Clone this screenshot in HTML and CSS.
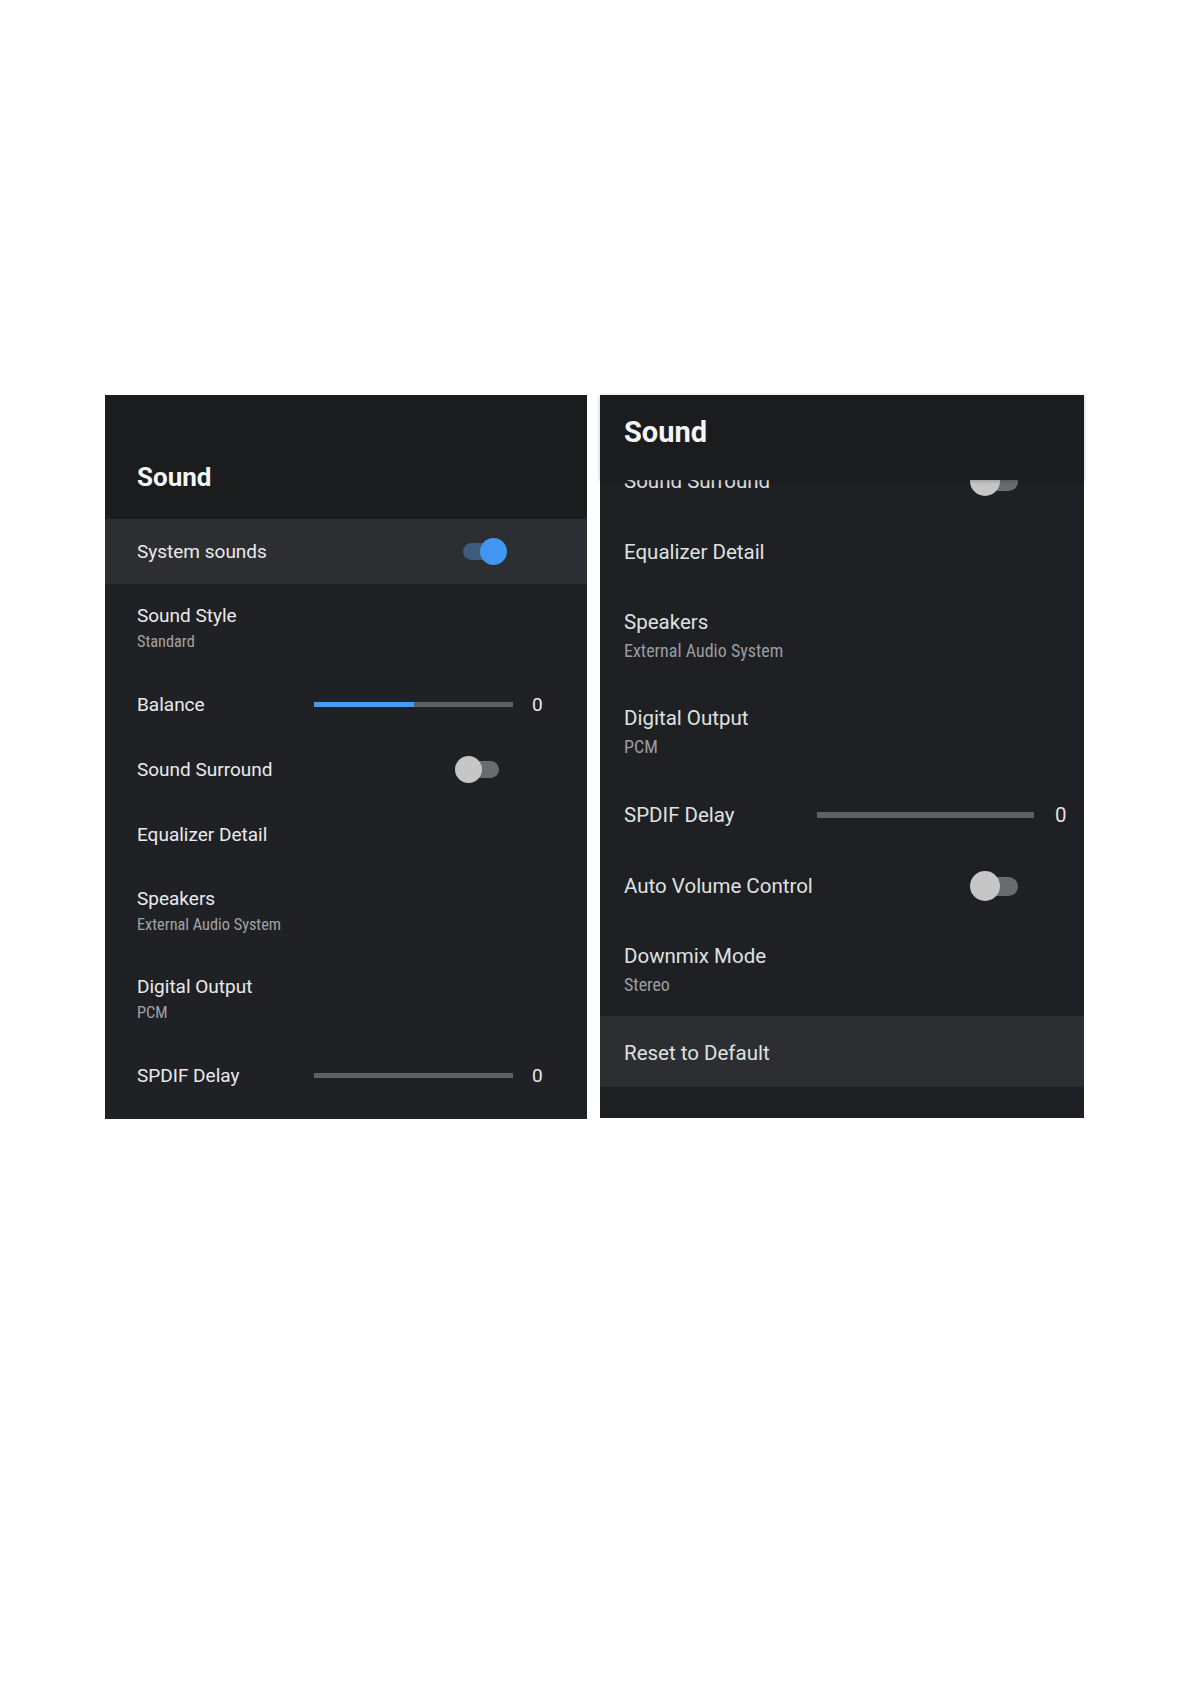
FILE: index.html
```html
<!DOCTYPE HTML>
<html>

<head>
  <title>Sound</title>
  <meta charset="utf-8" />
  <link rel="stylesheet" href="styles.css">
</head>

<body>
<div class="page">

  <!-- left: top of the list -->
  <div class="panel">
    <div class="panel-head">
      <h2 class="panel-title">Sound</h2>
    </div>
    <div class="list">
      <div class="row active">
        <span class="label">System sounds</span>
        <span class="switch on"></span>
      </div>
      <div class="row two">
        <span class="label">Sound Style</span>
        <span class="sub">Standard</span>
      </div>
      <div class="row">
        <span class="label fixed">Balance</span>
        <span class="slider"><span class="slider-fill" style="width:50%"></span></span>
        <span class="value">0</span>
      </div>
      <div class="row">
        <span class="label">Sound Surround</span>
        <span class="switch"></span>
      </div>
      <div class="row">
        <span class="label">Equalizer Detail</span>
      </div>
      <div class="row two">
        <span class="label">Speakers</span>
        <span class="sub">External Audio System</span>
      </div>
      <div class="row two">
        <span class="label">Digital Output</span>
        <span class="sub">PCM</span>
      </div>
      <div class="row">
        <span class="label fixed">SPDIF Delay</span>
        <span class="slider"></span>
        <span class="value">0</span>
      </div>
    </div>
  </div>

  <!-- right: same list, scrolled down -->
  <div class="panel big">
    <div class="panel-head">
      <h2 class="panel-title">Sound</h2>
    </div>
    <div class="list">
      <div class="scroll">
        <div class="row">
          <span class="label">Sound Surround</span>
          <span class="switch"></span>
        </div>
        <div class="row">
          <span class="label">Equalizer Detail</span>
        </div>
        <div class="row two">
          <span class="label">Speakers</span>
          <span class="sub">External Audio System</span>
        </div>
        <div class="row two">
          <span class="label">Digital Output</span>
          <span class="sub">PCM</span>
        </div>
        <div class="row">
          <span class="label fixed">SPDIF Delay</span>
          <span class="slider"></span>
          <span class="value">0</span>
        </div>
        <div class="row">
          <span class="label">Auto Volume Control</span>
          <span class="switch"></span>
        </div>
        <div class="row two">
          <span class="label">Downmix Mode</span>
          <span class="sub">Stereo</span>
        </div>
        <div class="row active">
          <span class="label">Reset to Default</span>
        </div>
      </div>
    </div>
  </div>

</div>
</body>

</html>
```
FILE: styles.css
```css
* {
  margin: 0;
  padding: 0;
  box-sizing: border-box;
}

body {
  background: #fff;
  font-family: Roboto, "Liberation Sans", sans-serif;
}

.page {
  display: flex;
  align-items: flex-start;
  gap: 13px;
  padding: 395px 0 0 105px;
}

/* ---- panel ---- */
.panel {
  width: 482px;
  background: #202124;
  color: #e8eaed;
  padding-bottom: 11px;
}

.panel-head {
  background: #1b1c1e;
  height: 124px;
  padding: 66px 32px 0;
}

.panel-title {
  font-size: 26px;
  line-height: 32px;
  font-weight: 700;
  color: #f4f5f6;
}

/* ---- rows ---- */
.row {
  display: flex;
  align-items: center;
  height: 65px;
  padding: 0 43px 0 32px;
}

.row.two {
  height: 88px;
  flex-direction: column;
  align-items: flex-start;
  justify-content: center;
}

.row.active {
  background: #2d2e31;
}

.label {
  font-size: 19px;
  line-height: 24px;
  flex: 1;
}

.row.two .label {
  flex: none;
}

.label.fixed {
  flex: 0 0 177px;
}

.sub {
  font-family: "Roboto Condensed", Roboto, sans-serif;
  font-stretch: condensed;
  font-size: 16.3px;
  line-height: 21px;
  margin-top: 3px;
  color: #a0a3a8;
}

/* ---- slider ---- */
.slider {
  flex: 1;
  height: 5px;
  background: #5f6064;
  display: flex;
}

.slider-fill {
  background: #4a9af0;
}

.value {
  width: 12px;
  margin-left: 19px;
  font-size: 19px;
  line-height: 24px;
}

/* ---- switch ---- */
.switch {
  position: relative;
  width: 36px;
  height: 17px;
  border-radius: 9px;
  background: #6a6b6e;
  margin-right: 45px;
}

.switch::after {
  content: "";
  position: absolute;
  left: -8px;
  top: -5px;
  width: 27px;
  height: 27px;
  border-radius: 50%;
  background: #c6c6c7;
}

.switch.on {
  background: #3f5b7b;
}

.switch.on::after {
  left: 17px;
  background: #4096f0;
}

/* ---- right panel, larger and scrolled ---- */
.panel.big {
  width: 484px;
  background: #1f2023;
  color: #dfe0e2;
  padding-bottom: 31px;
}

.big .panel-head {
  position: relative;
  z-index: 1;
  height: 85px;
  padding: 20px 24px 0;
  box-shadow: 0 1px 4px rgba(0, 0, 0, 0.25);
}

.big .panel-title {
  font-size: 29px;
  line-height: 34px;
}

.big .list {
  overflow: hidden;
}

.big .scroll {
  margin-top: -36px;
}

.big .row {
  height: 71px;
  padding: 3px 17px 0 24px;
}

.big .row.two {
  height: 96px;
}

.big .label {
  font-size: 20.5px;
  line-height: 26px;
}

.big .label.fixed {
  flex: 0 0 193px;
}

.big .sub {
  font-size: 18px;
  line-height: 22px;
  margin-top: 5px;
  color: #9b9da1;
}

.big .slider {
  height: 6px;
}

.big .value {
  margin-left: 21px;
  font-size: 20.5px;
}

.big .switch {
  width: 40px;
  height: 19px;
  border-radius: 10px;
  margin-right: 49px;
}

.big .switch::after {
  width: 30px;
  height: 30px;
  top: -5.5px;
}
```
